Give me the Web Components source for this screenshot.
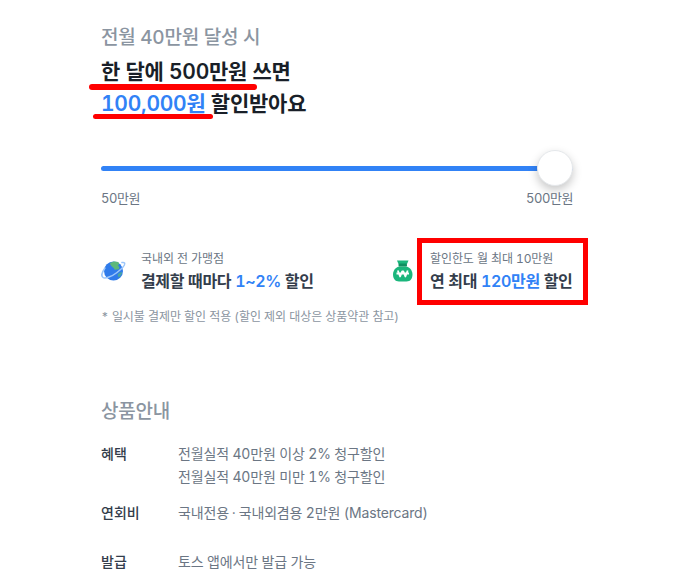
<!DOCTYPE html>
<html lang="ko">
<head>
<meta charset="utf-8">
<title>상품안내</title>
<style>
html, body { margin: 0; padding: 0; background: #fff; height: 580px; overflow: hidden; }
body { font-family: Inter, "Noto Sans CJK KR", sans-serif; }
</style>
</head>
<body>
<card-page>
    <savings-head></savings-head>
    <range-bar min-label="50만원" max-label="500만원"></range-bar>
    <benefit-row>
        <benefit-item label="국내외 전 가맹점" icon="globe">결제할 때마다 <b>1~2%</b> 할인</benefit-item>
        <benefit-item label="할인한도 월 최대 10만원" icon="money" marked>연 최대 <b>120만원</b> 할인</benefit-item>
    </benefit-row>
    <small-note>* 일시불 결제만 할인 적용 (할인 제외 대상은 상품약관 참고)</small-note>
    <product-info>
        <info-row name="혜택"><div>전월실적 40만원 이상 2% 청구할인</div><div>전월실적 40만원 미만 1% 청구할인</div></info-row>
        <info-row name="연회비" style="margin-top:13px">국내전용<span style="margin:0 3px">·</span>국내외겸용 2만원 (Mastercard)</info-row>
        <info-row name="발급" style="margin-top:26px">토스 앱에서만 발급 가능</info-row>
    </product-info>
</card-page>

<script>
(function() {
    const FONT = `Inter, 'Noto Sans CJK KR', sans-serif`;

    const icons = {
        globe: `
<svg width="26" height="24" viewBox="0 0 26 24">
    <circle cx="12.500" cy="12" r="9.500" fill="#2f7bea"/>
    <path d="M9 4c2-1.500 6-2 8-1 2 1 1 2.500 0 3.500 1 1 2 2.500 1 3.500-1 1-3 0-4 1-1-1-1-2-2-2.500S9 6 9 4z" fill="#5cb87a"/>
    <path d="M17 15c1-1 3-2 4-2 0 2-1 3.500-3 5.500-1-1-2-2.500-1-3.500z" fill="#4aa5a0"/>
    <path d="M4 9C1 13 0 17 2 18.500c2 1.500 9-1 14-5s8.500-8 7.500-9.500c-.4-.6-1.400-.7-2.600-.4" fill="none" stroke="#9cc6fa" stroke-width="1.500" stroke-linecap="round"/>
</svg>`,
        money: `
<svg width="24" height="24" viewBox="0 0 24 24">
    <path d="M6 1.500h11.500l-1.500 3.500H7.500z" fill="#1bb67c"/>
    <path d="M8 7.500h7.500c3.800 1 6 4.500 6 8 0 4.200-2.200 7-6 7H8c-3.800 0-6-2.800-6-7 0-3.500 2.200-7 6-8z" fill="#1bb67c"/>
    <rect x="7.500" y="4.500" width="8.500" height="3" rx="1" fill="#0f8f60"/>
    <path d="M6.800 11.500l2.300 6 2-5h1.300l2 5 2.300-6M5.500 14.500h12.500" fill="none" stroke="#fff" stroke-width="1.800" stroke-linejoin="round"/>
</svg>`
    };

    class CardPage extends HTMLElement {
        constructor() {
            super();
            this.attachShadow({ mode: 'open' });
            this.shadowRoot.innerHTML = `
<style>
:host {
    display: block;
    box-sizing: border-box;
    width: 677px;
    padding: 24px 104px 0 101px;
    font-family: ${FONT};
    font-variant-numeric: tabular-nums;
    color: #191f28;
}
</style>
<slot></slot>`;
        }
    }

    class SavingsHead extends HTMLElement {
        constructor() {
            super();
            this.attachShadow({ mode: 'open' });
            this.shadowRoot.innerHTML = `
<style>
:host { display: block; }
.sub {
    font-size: 19px;
    line-height: 28px;
    font-weight: 500;
    letter-spacing: -0.25px;
    color: #8b95a1;
}
.title {
    margin-top: 4px;
    font-size: 21px;
    line-height: 32px;
    font-weight: 600;
    letter-spacing: -0.25px;
    color: #191f28;
}
.line { display: block; position: relative; width: max-content; }
.amount { color: #3182f6; }
.mark {
    position: absolute;
    border-radius: 3px;
    background: #f00;
}
.mark-a { left: -12px; top: 28px; width: 168px; height: 6px; }
.mark-b { left: -8px; top: 26px; width: 120px; height: 5px; }
</style>
<div class="sub">전월 40만원 달성 시</div>
<div class="title">
    <span class="line">한 달에 500만원 쓰면<i class="mark mark-a"></i></span>
    <span class="line"><span class="amount">100,000원</span> 할인받아요<i class="mark mark-b"></i></span>
</div>`;
        }
    }

    class RangeBar extends HTMLElement {
        constructor() {
            super();
            this.attachShadow({ mode: 'open' });
            this.shadowRoot.innerHTML = `
<style>
:host { display: block; margin-top: 46px; }
.track {
    position: relative;
    height: 5px;
    border-radius: 3px;
    background: #3182f6;
}
.thumb {
    position: absolute;
    right: 0;
    top: -16px;
    width: 36px;
    height: 36px;
    border-radius: 50%;
    background: #fff;
    box-sizing: border-box;
    border: 1px solid #e5e8eb;
    box-shadow: 0 4px 10px rgba(0, 0, 0, 0.22);
}
.labels {
    display: flex;
    justify-content: space-between;
    margin-top: 17px;
    font-size: 13px;
    line-height: 20px;
    letter-spacing: -0.45px;
    color: #6b7684;
}
</style>
<div class="track"><div class="thumb"></div></div>
<div class="labels"><span id="min"></span><span id="max"></span></div>`;
        }

        connectedCallback() {
            this.shadowRoot.querySelector('#min').textContent = this.getAttribute('min-label');
            this.shadowRoot.querySelector('#max').textContent = this.getAttribute('max-label');
        }
    }

    class BenefitRow extends HTMLElement {
        constructor() {
            super();
            this.attachShadow({ mode: 'open' });
            this.shadowRoot.innerHTML = `
<style>
:host {
    display: grid;
    grid-template-columns: 290px 1fr;
    margin-top: 39px;
}
</style>
<slot></slot>`;
        }
    }

    class BenefitItem extends HTMLElement {
        constructor() {
            super();
            this.attachShadow({ mode: 'open' });
            this.shadowRoot.innerHTML = `
<style>
:host {
    display: flex;
    align-items: center;
    gap: 14px;
    position: relative;
    height: 47px;
}
.icon { flex: none; display: flex; width: 26px; height: 24px; }
.label {
    font-size: 12px;
    line-height: 18px;
    letter-spacing: -0.1px;
    color: #6b7684;
}
.value {
    margin-top: 2px;
    font-size: 16px;
    line-height: 22px;
    font-weight: 600;
    letter-spacing: -0.35px;
    color: #333d4b;
    white-space: nowrap;
}
::slotted(b) { font-weight: 600; color: #3182f6; }
.box {
    display: none;
    position: absolute;
    left: 26px;
    top: -9px;
    width: 171px;
    height: 67px;
    box-sizing: border-box;
    border: 5px solid #f00;
}
:host([marked]) .box { display: block; }
:host([marked]) { gap: 13px; }
</style>
<div class="icon" id="icon"></div>
<div>
    <div class="label" id="label"></div>
    <div class="value"><slot></slot></div>
</div>
<div class="box"></div>`;
        }

        connectedCallback() {
            this.shadowRoot.querySelector('#label').textContent = this.getAttribute('label');
            this.shadowRoot.querySelector('#icon').innerHTML = icons[this.getAttribute('icon')];
        }
    }

    class SmallNote extends HTMLElement {
        constructor() {
            super();
            this.attachShadow({ mode: 'open' });
            this.shadowRoot.innerHTML = `
<style>
:host {
    display: block;
    margin-top: 14px;
    font-size: 12px;
    line-height: 18px;
    letter-spacing: -0.06px;
    color: #8b95a1;
}
</style>
<slot></slot>`;
        }
    }

    class ProductInfo extends HTMLElement {
        constructor() {
            super();
            this.attachShadow({ mode: 'open' });
            this.shadowRoot.innerHTML = `
<style>
:host { display: block; margin-top: 72px; }
h2 {
    margin: 0 0 16px;
    font-size: 19px;
    line-height: 28px;
    font-weight: 500;
    letter-spacing: -0.2px;
    color: #8b95a1;
}
</style>
<h2>상품안내</h2>
<slot></slot>`;
        }
    }

    class InfoRow extends HTMLElement {
        constructor() {
            super();
            this.attachShadow({ mode: 'open' });
            this.shadowRoot.innerHTML = `
<style>
:host {
    display: grid;
    grid-template-columns: 77px 1fr;
    font-size: 14px;
    line-height: 23px;
}
.name { font-weight: 500; color: #333d4b; }
.text { color: #6b7684; letter-spacing: -0.17px; }
</style>
<div class="name" id="name"></div>
<div class="text"><slot></slot></div>`;
        }

        connectedCallback() {
            this.shadowRoot.querySelector('#name').textContent = this.getAttribute('name');
        }
    }

    window.customElements.define('card-page', CardPage);
    window.customElements.define('savings-head', SavingsHead);
    window.customElements.define('range-bar', RangeBar);
    window.customElements.define('benefit-row', BenefitRow);
    window.customElements.define('benefit-item', BenefitItem);
    window.customElements.define('small-note', SmallNote);
    window.customElements.define('product-info', ProductInfo);
    window.customElements.define('info-row', InfoRow);
})();
</script>
</body>
</html>
